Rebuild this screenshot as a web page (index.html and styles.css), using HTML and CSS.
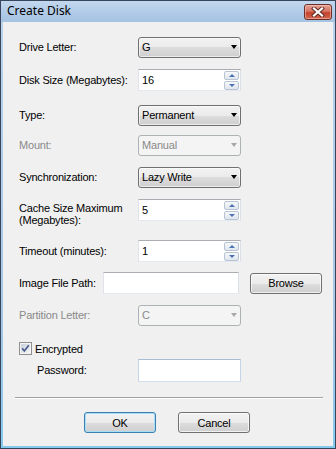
FILE: index.html
```html
<!DOCTYPE html>
<html lang="en">
<head>
  <meta charset="UTF-8" />
  <title>Create Disk</title>
  <link rel="stylesheet" href="styles.css">
</head>
<body>

  <div class="window">
    <!-- Title bar -->
    <div class="titlebar">
      <span class="title">Create Disk</span>
      <div class="close">
        <svg width="14" height="10" viewBox="0 0 14 10">
          <path d="M3 1.5 L11 8.5 M11 1.5 L3 8.5" stroke="#5a2a24" stroke-width="4" stroke-linecap="square" fill="none"/>
          <path d="M3 1.5 L11 8.5 M11 1.5 L3 8.5" stroke="#ffffff" stroke-width="2.2" stroke-linecap="square" fill="none"/>
        </svg>
      </div>
    </div>

    <div class="client">
      <div class="form">

        <div class="row">
          <span class="lbl">Drive Letter:</span>
          <div class="combo"><span>G</span><i class="arrow"></i></div>
        </div>

        <div class="row">
          <span class="lbl">Disk Size (Megabytes):</span>
          <div class="spin">
            <span>16</span>
            <div class="spin-btns"><b class="spin-btn up"></b><b class="spin-btn down"></b></div>
          </div>
        </div>

        <div class="row">
          <span class="lbl">Type:</span>
          <div class="combo"><span>Permanent</span><i class="arrow"></i></div>
        </div>

        <div class="row">
          <span class="lbl disabled">Mount:</span>
          <div class="combo off"><span>Manual</span><i class="arrow"></i></div>
        </div>

        <div class="row">
          <span class="lbl">Synchronization:</span>
          <div class="combo"><span>Lazy Write</span><i class="arrow"></i></div>
        </div>

        <div class="row top">
          <span class="lbl two-line">Cache Size Maximum<br>(Megabytes):</span>
          <div class="spin">
            <span>5</span>
            <div class="spin-btns"><b class="spin-btn up"></b><b class="spin-btn down"></b></div>
          </div>
        </div>

        <div class="row">
          <span class="lbl">Timeout (minutes):</span>
          <div class="spin">
            <span>1</span>
            <div class="spin-btns"><b class="spin-btn up"></b><b class="spin-btn down"></b></div>
          </div>
        </div>

        <div class="row">
          <span class="lbl short">Image File Path:</span>
          <div class="textbox wide"></div>
          <button class="btn browse">Browse</button>
        </div>

        <div class="row">
          <span class="lbl disabled">Partition Letter:</span>
          <div class="combo off"><span>C</span><i class="arrow"></i></div>
        </div>

        <div class="row check-row">
          <svg class="checkbox" width="13" height="13" viewBox="0 0 13 13">
            <defs>
              <linearGradient id="cbfill" x1="0" y1="0" x2="1" y2="1">
                <stop offset="0" stop-color="#c9d0da"/>
                <stop offset="1" stop-color="#f4f6f8"/>
              </linearGradient>
            </defs>
            <rect x="0.5" y="0.5" width="12" height="12" fill="#f4f4f4" stroke="#8f8f8f"/>
            <rect x="2" y="2" width="9" height="9" fill="url(#cbfill)"/>
            <path d="M3.2 6.4 L5.4 9 L9.8 3.2" stroke="#4a5c8c" stroke-width="1.7" fill="none"/>
          </svg>
          <span>Encrypted</span>
        </div>

        <div class="row">
          <span class="lbl indent">Password:</span>
          <div class="textbox pass"></div>
        </div>

      </div>

      <div class="separator"></div>

      <div class="actions">
        <button class="btn default">OK</button>
        <button class="btn">Cancel</button>
      </div>
    </div>
  </div>

</body>
</html>
```

FILE: styles.css
```css
body {
  margin: 0;
  font-family: 'Liberation Sans', Arial, sans-serif;
  font-size: 11px;
  letter-spacing: -0.2px;
  color: #000;
  background: #f0f0f0;
}

.window {
  width: 336px;
  height: 449px;
  box-sizing: border-box;
  border: 1px solid #37465a;
  background: linear-gradient(#bcd3eb, #a7c6e6 70%, #86c9ee);
  display: flex;
  flex-direction: column;
}

/* Title bar */
.titlebar {
  height: 21px;
  display: flex;
  justify-content: space-between;
  align-items: flex-start;
  background: linear-gradient(#c3d8ee, #b2cbe8 50%, #a6c3e3);
}

.title {
  font-family: 'Noto Sans', sans-serif;
  font-size: 12px;
  letter-spacing: 0;
  line-height: 20px;
  padding-left: 6px;
}

.close {
  width: 28px;
  height: 16px;
  box-sizing: border-box;
  margin: 3px 3px 0 0;
  border: 1px solid #6b2f27;
  border-radius: 3px;
  background: linear-gradient(#e6a093, #d57563 45%, #c5412c 55%, #d0684f);
  box-shadow: inset 0 0 0 1px rgba(255, 210, 200, 0.5);
  display: flex;
  align-items: center;
  justify-content: center;
}

/* Client area */
.client {
  flex: 1;
  margin: 0 2px 2px;
  background: #f0f0f0;
  display: flex;
  flex-direction: column;
}

.form {
  display: grid;
  grid-template-rows: 33px 35px 30px 32px 33px 41px 32px 32px 38px 17px 38px;
  padding: 14px 0 0 16px;
}

.row {
  display: flex;
  align-items: center;
  height: 22px;
}

.row.top {
  align-items: flex-start;
}

.lbl {
  width: 119px;
  flex-shrink: 0;
  white-space: nowrap;
}

.lbl.short {
  width: 84px;
}

.lbl.indent {
  box-sizing: border-box;
  padding-left: 18px;
}

.lbl.two-line {
  line-height: 12px;
  padding-top: 3px;
}

.disabled {
  color: #8a8a8a;
}

/* Combo boxes */
.combo {
  width: 103px;
  height: 21px;
  box-sizing: border-box;
  border: 1px solid #707070;
  border-radius: 3px;
  background: linear-gradient(#f2f2f2, #ebebeb 50%, #dddddd 50%, #cfcfcf);
  box-shadow: inset 0 0 0 1px rgba(255, 255, 255, 0.6);
  display: flex;
  align-items: center;
  justify-content: space-between;
  padding: 0 3px 0 3px;
}

.combo .arrow {
  width: 0;
  height: 0;
  border-left: 3.5px solid transparent;
  border-right: 3.5px solid transparent;
  border-top: 4px solid #000;
}

.combo.off {
  border-color: #adb2b5;
  background: #f4f4f4;
  box-shadow: none;
  color: #8a8a8a;
}

.combo.off .arrow {
  border-top-color: #a8a8a8;
}

/* Spin boxes */
.spin {
  width: 103px;
  height: 22px;
  box-sizing: border-box;
  border: 1px solid;
  border-color: #abadb3 #dbdfe6 #e3e9ef #e2e3ea;
  background: #fff;
  display: flex;
  align-items: center;
  justify-content: space-between;
  padding-left: 3px;
}

.spin-btns {
  display: flex;
  flex-direction: column;
  gap: 1px;
  margin-right: 1px;
}

.spin-btn {
  width: 15px;
  height: 9px;
  box-sizing: border-box;
  border: 1px solid #b8c4d2;
  border-radius: 2px;
  background: linear-gradient(#f6f8fa, #dfe6ee);
  display: flex;
  align-items: center;
  justify-content: center;
}

.spin-btn::after {
  content: '';
  width: 0;
  height: 0;
  border-left: 3px solid transparent;
  border-right: 3px solid transparent;
}

.spin-btn.up::after {
  border-bottom: 3px solid #4d73b0;
}

.spin-btn.down::after {
  border-top: 3px solid #4d73b0;
}

/* Text boxes */
.textbox {
  height: 22px;
  box-sizing: border-box;
  border: 1px solid;
  border-color: #abadb3 #dbdfe6 #e3e9ef #e2e3ea;
  background: #fff;
}

.textbox.wide {
  width: 136px;
}

.textbox.pass {
  width: 103px;
  height: 23px;
  border-color: #a9bdd3 #c6d5e5 #d3dfec #c6d5e5;
}

/* Buttons */
.btn {
  width: 72px;
  height: 21px;
  box-sizing: border-box;
  border: 1px solid #707070;
  border-radius: 3px;
  background: linear-gradient(#f2f2f2, #ebebeb 50%, #dddddd 50%, #cfcfcf);
  box-shadow: inset 0 0 0 1px rgba(255, 255, 255, 0.7);
  font-family: inherit;
  font-size: 11px;
  letter-spacing: inherit;
  color: #000;
  padding: 0;
}

.btn.browse {
  margin-left: 11px;
}

.btn.default {
  border-color: #3c7fb1;
  box-shadow: inset 0 0 0 1px #a8def5;
}

/* Checkbox */
.check-row {
  height: 13px;
  gap: 3px;
}

.checkbox {
  display: block;
}

.separator {
  margin: 0 10px 0 12px;
  border-top: 1px solid #a0a0a0;
  border-bottom: 1px solid #fff;
}

.actions {
  display: flex;
  justify-content: center;
  gap: 22px;
  margin-top: 13px;
  padding-right: 2px;
}
```
